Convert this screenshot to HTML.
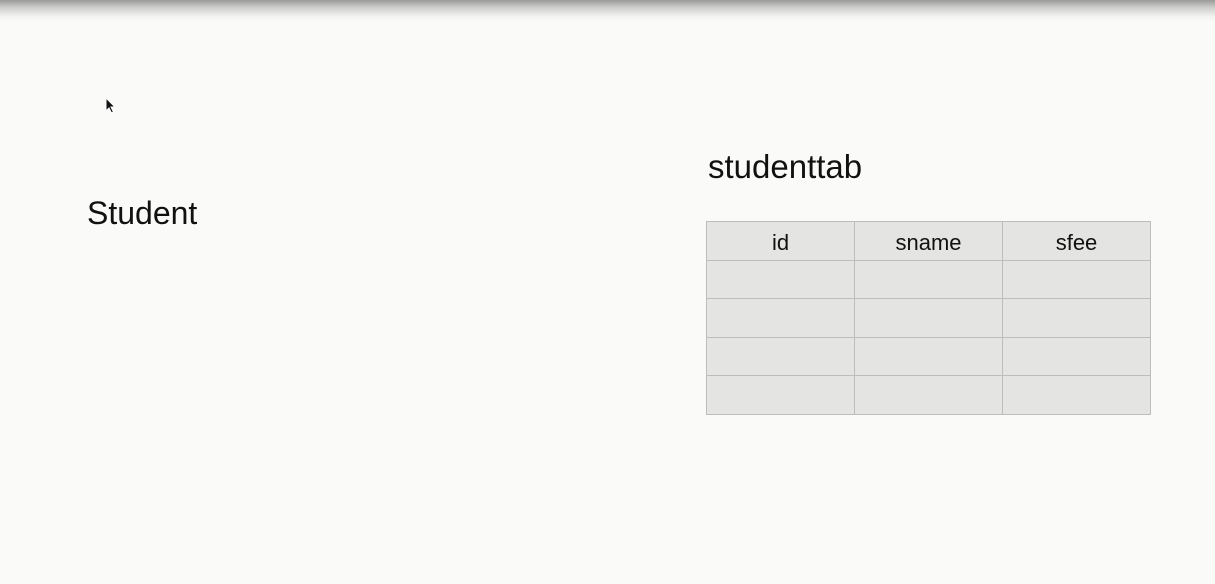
<!DOCTYPE html>
<html><head><style>
html,body{margin:0;padding:0;}
body{width:1215px;height:584px;background:#fafaf8;position:relative;overflow:hidden;font-family:"Liberation Sans",sans-serif;color:#111;}
.top{position:absolute;left:0;top:0;width:1215px;height:22px;background:linear-gradient(#9a9a98 0%,#cfcfcd 35%,#f2f2f0 75%,#fafaf8 100%);}
.t{position:absolute;white-space:nowrap;font-weight:normal;}
table{position:absolute;left:706px;top:221px;border-collapse:collapse;background:#e4e4e2;border:1px solid #a9a9a7;}
td{border:1px solid #bdbdbb;width:147px;padding:0;text-align:center;font-size:22px;color:#111;}
</style></head><body>
<div class="top"></div>
<svg style="position:absolute;left:105px;top:97px" width="12" height="18" viewBox="0 0 12 18"><path d="M1 1 L1 14 L4 11 L6.5 16 L8.5 15 L6 10 L10 10 Z" fill="#111" stroke="#fff" stroke-width="1"/></svg>
<div class="t" style="left:87px;top:195px;font-size:32px;">Student</div>
<div class="t" style="left:708px;top:148px;font-size:33px;">studenttab</div>
<table>
<tr style="height:39px"><td style="padding-top:3px">id</td><td style="padding-top:3px">sname</td><td style="padding-top:3px">sfee</td></tr>
<tr style="height:38px"><td></td><td></td><td></td></tr>
<tr style="height:39px"><td></td><td></td><td></td></tr>
<tr style="height:38px"><td></td><td></td><td></td></tr>
<tr style="height:39px"><td></td><td></td><td></td></tr>
</table>
</body></html>
